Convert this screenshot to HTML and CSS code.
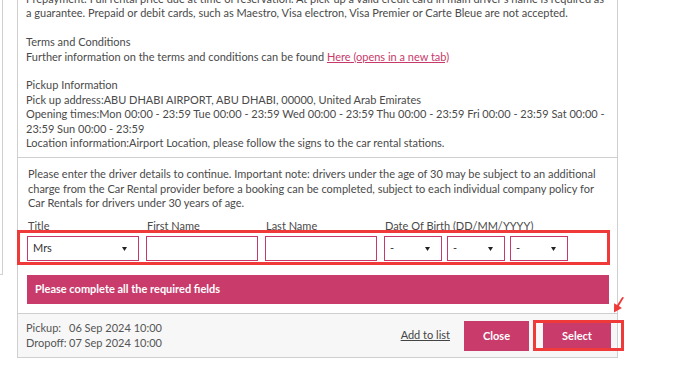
FILE: index.html
```html
<!DOCTYPE html>
<html lang="en">
<head>
    <meta charset="UTF-8">
    <meta name="viewport" content="width=device-width, initial-scale=1.0">
    <title>Car Rental Details</title>
    <link rel="stylesheet" href="styles.css">
</head>
<body>
    <div class="page">
        <div class="backdrop"></div>
        <div class="panel">
            <div class="info">
                <p>Prepayment: Full rental price due at time of reservation. At pick-up a valid credit card in main driver's name is required as a guarantee. Prepaid or debit cards, such as Maestro, Visa electron, Visa Premier or Carte Bleue are not accepted.</p>
                <p>Terms and Conditions<br>Further information on the terms and conditions can be found <a href="#">Here (opens in a new tab)</a></p>
                <p>Pickup Information<br>Pick up address:ABU DHABI AIRPORT, ABU DHABI, 00000, United Arab Emirates<br>Opening times:Mon 00:00 - 23:59 Tue 00:00 - 23:59 Wed 00:00 - 23:59 Thu 00:00 - 23:59 Fri 00:00 - 23:59 Sat 00:00 - 23:59 Sun 00:00 - 23:59<br>Location information:Airport Location, please follow the signs to the car rental stations.</p>
            </div>
            <div class="driver">
                <p class="note">Please enter the driver details to continue. Important note: drivers under the age of 30 may be subject to an additional charge from the Car Rental provider before a booking can be completed, subject to each individual company policy for Car Rentals for drivers under 30 years of age.</p>
                <div class="labels">
                    <span class="col">Title</span>
                    <span class="col">First Name</span>
                    <span class="col">Last Name</span>
                    <span>Date Of Birth (DD/MM/YYYY)</span>
                </div>
                <div class="fields">
                    <div class="select col"><span>Mrs</span><svg width="5" height="4" viewBox="0 0 5 4"><path d="M0 0h5L2.5 4z" fill="#222"/></svg></div>
                    <input class="input col" type="text">
                    <input class="input col" type="text">
                    <div class="dob">
                        <div class="select small"><span>-</span><svg width="5" height="4" viewBox="0 0 5 4"><path d="M0 0h5L2.5 4z" fill="#222"/></svg></div>
                        <div class="select small"><span>-</span><svg width="5" height="4" viewBox="0 0 5 4"><path d="M0 0h5L2.5 4z" fill="#222"/></svg></div>
                        <div class="select small"><span>-</span><svg width="5" height="4" viewBox="0 0 5 4"><path d="M0 0h5L2.5 4z" fill="#222"/></svg></div>
                    </div>
                </div>
                <div class="error">Please complete all the required fields</div>
            </div>
            <div class="footer">
                <div class="dates">
                    <div><span class="lbl">Pickup:</span>06 Sep 2024 10:00</div>
                    <div><span class="lbl">Dropoff:</span>07 Sep 2024 10:00</div>
                </div>
                <a href="#" class="add">Add to list</a>
                <button class="btn">Close</button>
                <div class="select-wrap">
                    <button class="btn select-btn">Select</button>
                    <svg class="arrow" width="11" height="16" viewBox="0 0 11 16"><path d="M1 15.5L1.1 6.3L4.1 8.1L9.3 0L11 0.6L5.9 9.1L8.9 10.9Z" fill="#f03a3a"/></svg>
                </div>
            </div>
        </div>
    </div>
</body>
</html>
```

FILE: styles.css
```css
body {
    margin: 0;
    background-color: #fff;
    font-family: Lato, "Open Sans", sans-serif;
    font-size: 11px;
    line-height: 14.4px;
    color: #4a4a4a;
    overflow: hidden;
}

.page {
    display: flex;
    align-items: flex-start;
}

/* page behind the modal */
.backdrop {
    width: 2px;
    height: 274px;
    border-right: 1px solid #d0d0d0;
    border-bottom: 1px solid #d0d0d0;
}

.panel {
    margin-left: 14px;
    width: 599px;
    border: 1px solid #cfcfcf;
    border-top: none;
}

.info {
    margin-top: -8px;
    padding: 0 8px 7px 8px;
    border-bottom: 1px solid #cfcfcf;
}

.info p {
    margin: 0 0 14.4px 0;
}

.info p:last-child {
    margin-bottom: 0;
}

.info a {
    color: #c8396b;
    text-decoration: underline;
}

.driver {
    padding: 9px 8px 9px 9px;
    border-bottom: 1px solid #cfcfcf;
}

.note {
    margin: 0 0 0 1px;
}

.labels {
    display: flex;
    gap: 7px;
    margin-top: 8px;
    margin-left: 1px;
}

.col {
    width: 112px;
    flex: none;
}

.fields {
    position: relative;
    display: flex;
    gap: 7px;
    margin-top: 3px;
    height: 25px;
}

/* red highlight around the form row */
.fields::after {
    content: '';
    position: absolute;
    top: -6px;
    left: -10px;
    right: -1px;
    bottom: -4px;
    border: 3px solid #f03a3a;
    pointer-events: none;
}

.select, .input {
    box-sizing: border-box;
    height: 25px;
    border: 1px solid #c8396b;
    background-color: #fff;
    font-family: inherit;
    font-size: 11px;
}

.select {
    display: flex;
    align-items: center;
    justify-content: space-between;
    padding: 0 11px 0 5px;
    color: #333;
}

.select.small {
    width: 58px;
}

.dob {
    display: flex;
    gap: 5px;
}

.error {
    margin-top: 14px;
    height: 29px;
    display: flex;
    align-items: center;
    padding-left: 8px;
    background-color: #c83b6b;
    color: #fff;
    font-weight: bold;
    font-size: 11px;
}

.footer {
    display: flex;
    align-items: center;
    height: 43px;
    padding: 0 6px 0 8px;
    background-color: #f7f7f7;
    font-size: 11px;
    color: #555;
}

.dates {
    flex: 1;
}

.lbl {
    display: inline-block;
    width: 43px;
}

.add {
    color: #444;
    font-size: 11px;
    text-decoration: underline;
    margin-right: 14px;
}

.btn {
    height: 30px;
    width: 65px;
    border: none;
    background-color: #c83b6b;
    color: #fff;
    font-family: inherit;
    font-size: 11px;
    font-weight: bold;
}

.select-wrap {
    position: relative;
    margin-left: 14px;
}

.select-btn {
    width: 68px;
    display: block;
}

/* red highlight around Select */
.select-wrap::after {
    content: '';
    position: absolute;
    top: -1px;
    left: -10px;
    right: -13px;
    bottom: 0;
    border: 3px solid #f03a3a;
}

.arrow {
    position: absolute;
    top: -24px;
    right: -13px;
}
```
